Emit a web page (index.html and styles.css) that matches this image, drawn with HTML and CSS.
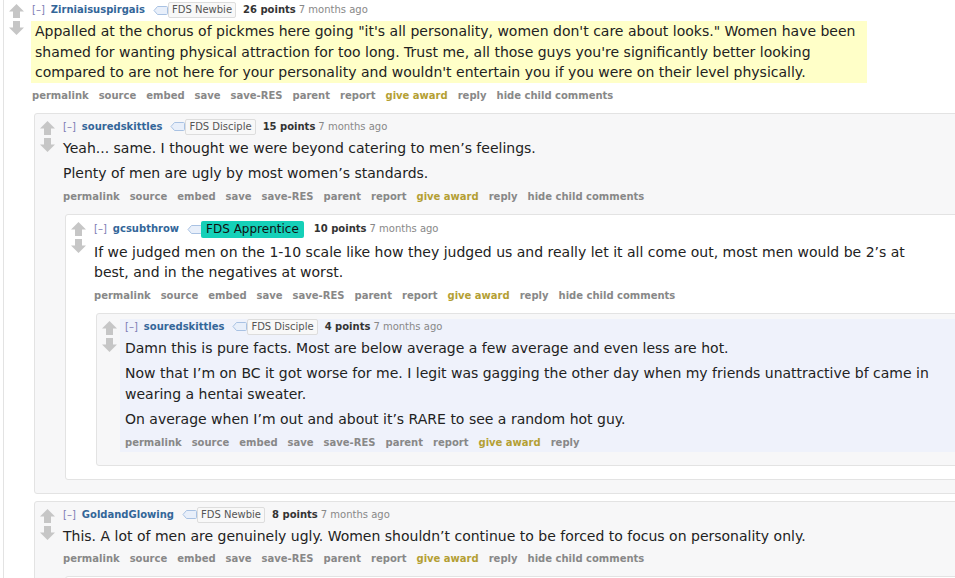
FILE: index.html
```html
<!DOCTYPE html>
<html lang="en">
<head>
<meta charset="utf-8">
<title>comments</title>
<link rel="stylesheet" href="styles.css">
</head>
<body>
<div class="thread">
  <div class="comment odd root">
    <div class="midcol">
      <svg class="arrow" viewBox="0 0 15 14"><polygon points="7.5,0 15,7.5 11,7.5 11,14 4,14 4,7.5 0,7.5"/></svg>
      <svg class="arrow" viewBox="0 0 15 14"><polygon points="4,0 11,0 11,6.5 15,6.5 7.5,14 0,6.5 4,6.5"/></svg>
    </div>
    <div class="entry">
      <p class="tagline">
        <a class="expand">[–]</a>
        <a class="author">Zirniaisuspirgais</a>
        <svg class="tag" viewBox="0 0 15 9"><path d="M1 4.5 L4.5 0.5 H13.5 Q14.5 0.5 14.5 1.5 V7.5 Q14.5 8.5 13.5 8.5 H4.5 Z"/></svg><span class="flair">FDS Newbie</span>
        <span class="score">26 points</span>
        <span class="time">7 months ago</span>
      </p>
      <div class="md highlight">
        <p>Appalled at the chorus of pickmes here going "it's all personality, women don't care about looks." Women have been shamed for wanting physical attraction for too long. Trust me, all those guys you're significantly better looking compared to are not here for your personality and wouldn't entertain you if you were on their level physically.</p>
      </div>
      <ul class="buttons">
        <li>permalink</li><li>source</li><li>embed</li><li>save</li><li>save-RES</li><li>parent</li><li>report</li><li class="award">give award</li><li>reply</li><li>hide child comments</li>
      </ul>
    </div>
    <div class="child">
      <div class="comment even">
        <div class="midcol">
          <svg class="arrow" viewBox="0 0 15 14"><polygon points="7.5,0 15,7.5 11,7.5 11,14 4,14 4,7.5 0,7.5"/></svg>
          <svg class="arrow" viewBox="0 0 15 14"><polygon points="4,0 11,0 11,6.5 15,6.5 7.5,14 0,6.5 4,6.5"/></svg>
        </div>
        <div class="entry">
          <p class="tagline">
            <a class="expand">[–]</a>
            <a class="author">souredskittles</a>
            <svg class="tag" viewBox="0 0 15 9"><path d="M1 4.5 L4.5 0.5 H13.5 Q14.5 0.5 14.5 1.5 V7.5 Q14.5 8.5 13.5 8.5 H4.5 Z"/></svg><span class="flair">FDS Disciple</span>
            <span class="score">15 points</span>
            <span class="time">7 months ago</span>
          </p>
          <div class="md">
            <p>Yeah... same. I thought we were beyond catering to men’s feelings.</p>
            <p>Plenty of men are ugly by most women’s standards.</p>
          </div>
          <ul class="buttons">
            <li>permalink</li><li>source</li><li>embed</li><li>save</li><li>save-RES</li><li>parent</li><li>report</li><li class="award">give award</li><li>reply</li><li>hide child comments</li>
          </ul>
        </div>
        <div class="child">
          <div class="comment odd">
            <div class="midcol">
              <svg class="arrow" viewBox="0 0 15 14"><polygon points="7.5,0 15,7.5 11,7.5 11,14 4,14 4,7.5 0,7.5"/></svg>
              <svg class="arrow" viewBox="0 0 15 14"><polygon points="4,0 11,0 11,6.5 15,6.5 7.5,14 0,6.5 4,6.5"/></svg>
            </div>
            <div class="entry">
              <p class="tagline">
                <a class="expand">[–]</a>
                <a class="author">gcsubthrow</a>
                <svg class="tag" viewBox="0 0 15 9"><path d="M1 4.5 L4.5 0.5 H13.5 Q14.5 0.5 14.5 1.5 V7.5 Q14.5 8.5 13.5 8.5 H4.5 Z"/></svg><span class="flair big">FDS Apprentice</span>
                <span class="score">10 points</span>
                <span class="time">7 months ago</span>
              </p>
              <div class="md narrow">
                <p>If we judged men on the 1-10 scale like how they judged us and really let it all come out, most men would be 2’s at best, and in the negatives at worst.</p>
              </div>
              <ul class="buttons">
                <li>permalink</li><li>source</li><li>embed</li><li>save</li><li>save-RES</li><li>parent</li><li>report</li><li class="award">give award</li><li>reply</li><li>hide child comments</li>
              </ul>
            </div>
            <div class="child">
              <div class="comment even">
                <div class="midcol">
                  <svg class="arrow" viewBox="0 0 15 14"><polygon points="7.5,0 15,7.5 11,7.5 11,14 4,14 4,7.5 0,7.5"/></svg>
                  <svg class="arrow" viewBox="0 0 15 14"><polygon points="4,0 11,0 11,6.5 15,6.5 7.5,14 0,6.5 4,6.5"/></svg>
                </div>
                <div class="entry unread">
                  <p class="tagline">
                    <a class="expand">[–]</a>
                    <a class="author">souredskittles</a>
                    <svg class="tag" viewBox="0 0 15 9"><path d="M1 4.5 L4.5 0.5 H13.5 Q14.5 0.5 14.5 1.5 V7.5 Q14.5 8.5 13.5 8.5 H4.5 Z"/></svg><span class="flair">FDS Disciple</span>
                    <span class="score">4 points</span>
                    <span class="time">7 months ago</span>
                  </p>
                  <div class="md">
                    <p>Damn this is pure facts. Most are below average a few average and even less are hot.</p>
                    <p>Now that I’m on BC it got worse for me. I legit was gagging the other day when my friends unattractive bf came in wearing a hentai sweater.</p>
                    <p>On average when I’m out and about it’s RARE to see a random hot guy.</p>
                  </div>
                  <ul class="buttons">
                    <li>permalink</li><li>source</li><li>embed</li><li>save</li><li>save-RES</li><li>parent</li><li>report</li><li class="award">give award</li><li>reply</li>
                  </ul>
                </div>
              </div>
            </div>
          </div>
        </div>
      </div>

      <div class="comment even">
        <div class="midcol">
          <svg class="arrow" viewBox="0 0 15 14"><polygon points="7.5,0 15,7.5 11,7.5 11,14 4,14 4,7.5 0,7.5"/></svg>
          <svg class="arrow" viewBox="0 0 15 14"><polygon points="4,0 11,0 11,6.5 15,6.5 7.5,14 0,6.5 4,6.5"/></svg>
        </div>
        <div class="entry">
          <p class="tagline">
            <a class="expand">[–]</a>
            <a class="author">GoldandGlowing</a>
            <svg class="tag" viewBox="0 0 15 9"><path d="M1 4.5 L4.5 0.5 H13.5 Q14.5 0.5 14.5 1.5 V7.5 Q14.5 8.5 13.5 8.5 H4.5 Z"/></svg><span class="flair">FDS Newbie</span>
            <span class="score">8 points</span>
            <span class="time">7 months ago</span>
          </p>
          <div class="md">
            <p>This. A lot of men are genuinely ugly. Women shouldn’t continue to be forced to focus on personality only.</p>
          </div>
          <ul class="buttons">
            <li>permalink</li><li>source</li><li>embed</li><li>save</li><li>save-RES</li><li>parent</li><li>report</li><li class="award">give award</li><li>reply</li><li>hide child comments</li>
          </ul>
        </div>
        <div class="child">
          <div class="comment odd">
            <div class="midcol"></div>
            <div class="entry"><p class="tagline">&nbsp;</p></div>
          </div>
        </div>
      </div>
    </div>
  </div>
</div>
</body>
</html>
```

FILE: styles.css
```css
html, body {
  overflow: hidden;
}

body {
  margin: 0;
  background: #fff;
  font-family: "DejaVu Sans", Verdana, sans-serif;
  color: #222;
}

.thread {
  width: 1120px;
  margin: -4px 0 0 3px;
}

/* comment box: vote column on the left, entry on the right, children below the entry */
.comment {
  display: grid;
  grid-template-columns: 18px 1fr;
  align-items: start;
  border: 1px solid #e3e3e3;
  border-radius: 3px;
  padding: 5px 0 13px 5px;
}

.comment.odd { background: #fff; }
.comment.even { background: #f7f7f8; }

.midcol {
  grid-column: 1;
  grid-row: 1;
  display: flex;
  flex-direction: column;
  gap: 3px;
  padding-top: 2px;
}

.arrow {
  width: 15px;
  height: 14px;
  fill: #c6c6c6;
}

.entry {
  grid-column: 2;
  grid-row: 1;
  padding: 0 0 2px 5px;
}

.entry.unread {
  background: #eff2fb;
}

.child {
  grid-column: 2;
  grid-row: 2;
  margin: 8px 0 0 7px;
  display: flex;
  flex-direction: column;
  gap: 7px;
}

/* tagline */
.tagline {
  margin: 0;
  font-size: 10px;
  line-height: 14px;
  color: #888;
  display: flex;
  align-items: center;
  white-space: nowrap;
}

.expand {
  color: #7d7bb4;
  margin-right: 6px;
}

.author {
  color: #369;
  font-weight: bold;
  margin-right: 8px;
}

.tag {
  width: 15px;
  height: 9px;
  fill: #e8effa;
  stroke: #a9c2e3;
  stroke-width: 1;
}

.flair {
  border: 1px solid #ddd;
  border-radius: 2px;
  background: #f8f8f8;
  color: #555;
  padding: 0 3px;
  line-height: 14px;
  margin-right: 7px;
}

.flair.big {
  border: 0;
  background: #15d0b8;
  color: #111;
  font-size: 12px;
  line-height: 17px;
  padding: 0 5px;
  margin: 1px 10px 1px -1px;
}

.score {
  color: #333;
  font-weight: bold;
  margin-right: 3px;
}

.time {
  color: #888;
}

/* comment body */
.md {
  margin-top: 3px;
  max-width: 840px;
  font-size: 14px;
  line-height: 20.5px;
  color: #222;
}

.md.narrow {
  max-width: 820px;
}

.md p {
  margin: 0 0 5px;
}

.md.highlight {
  background: #ffffc8;
  max-width: 832px;
  margin: 3px 0 0 -1px;
  padding: 0 0 0 4px;
}

.md.highlight p {
  margin: 0;
}

.md.highlight + .buttons {
  padding-top: 6px;
}

/* action links */
.buttons {
  list-style: none;
  margin: 0;
  padding: 1px 0 0;
  display: flex;
  gap: 10px;
  font-size: 10px;
  line-height: 14px;
  font-weight: bold;
  color: #888;
  white-space: nowrap;
}

.buttons .award {
  color: #b49f34;
}
```
